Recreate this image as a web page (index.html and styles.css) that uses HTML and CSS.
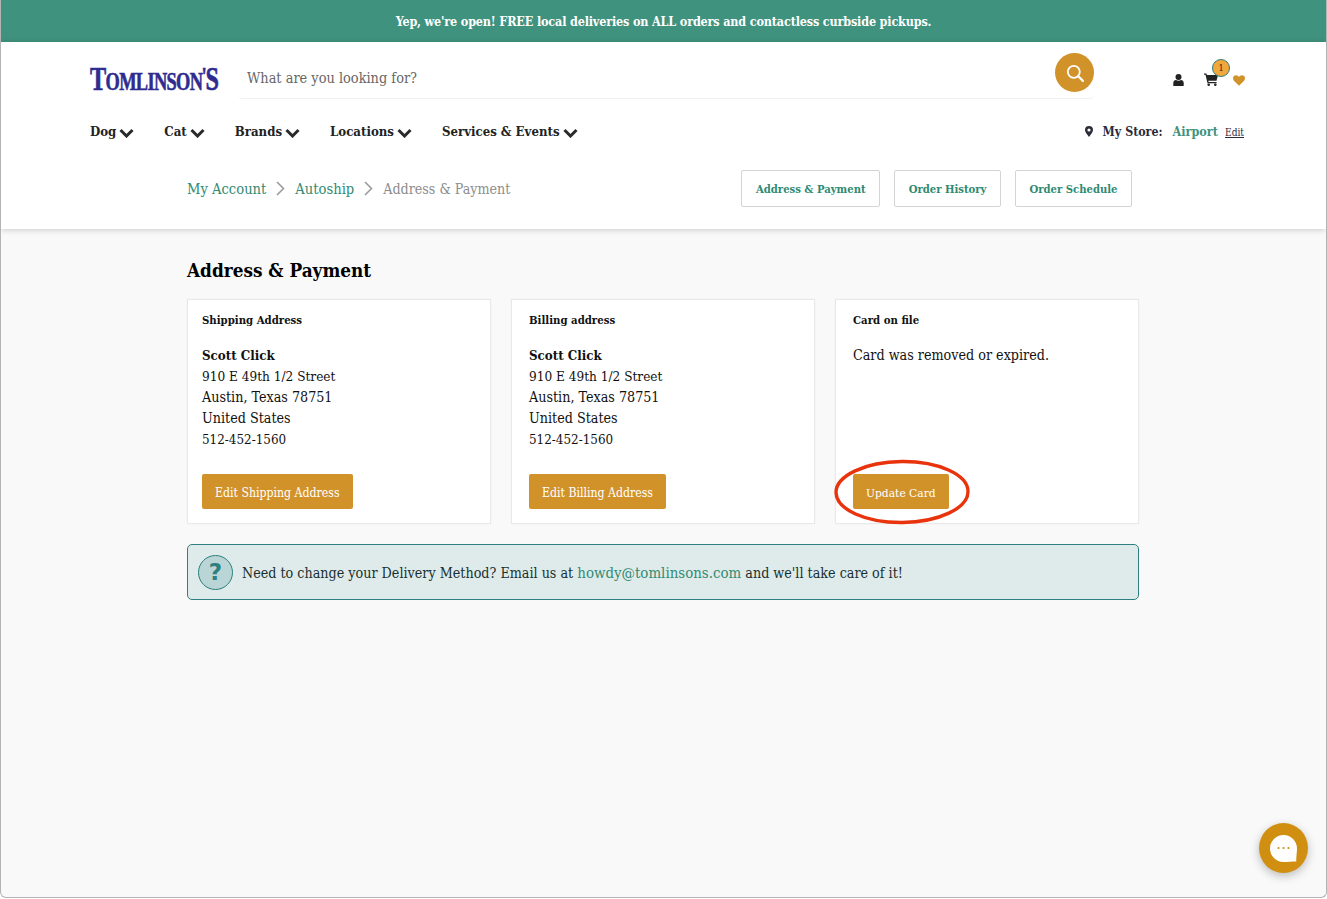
FILE: index.html
```html
<!DOCTYPE html>
<html lang="en">
<head>
<meta charset="utf-8">
<title>Address &amp; Payment</title>
<link rel="stylesheet" href="styles.css">
</head>
<body>
<div class="window">
  <div class="promo">Yep, we're open! FREE local deliveries on ALL orders and contactless curbside pickups.</div>
  <header class="header">
    <div class="top-row">
      <div class="logo-box"><a class="logo"><span class="logo-big">T</span>OMLINSON<span class="logo-apos">'</span><span class="logo-big">S</span></a></div>
      <div class="search">
        <span class="search-text">What are you looking for?</span>
        <span class="search-btn">
          <svg width="20" height="20" viewBox="0 0 20 20" fill="none" stroke="#fff" stroke-width="1.8" stroke-linecap="round"><circle cx="8.8" cy="8.8" r="6"/><path d="M13.3 13.3l4.6 4.6" stroke-width="2.2"/></svg>
        </span>
      </div>
      <div class="icons">
        <svg class="icon-user" width="11" height="12" viewBox="0 0 11 12" fill="#222"><circle cx="5.5" cy="3" r="3"/><path d="M0.3 12V8.8C0.3 7.2 1.6 6 3 6c.7.5 1.5.8 2.5.8S7.300 6.500 8 6c1.400 0 2.700 1.200 2.700 2.800V12z"/></svg>
        <span class="cart">
          <svg width="14" height="13" viewBox="0 0 14 13" fill="#222"><path d="M0 .6h2.400l.5 1.500H14l-1.500 5.700H4.300l.3 1.300h8v1.200H3.500L1.500 1.800H0z"/><circle cx="4.700" cy="11.700" r="1.300"/><circle cx="11.300" cy="11.700" r="1.300"/></svg>
          <span class="badge">1</span>
        </span>
        <svg class="icon-heart" width="12" height="11" viewBox="0 0 12 11" fill="#d2922a"><path d="M6 10.800L.9 5.700C-.3 4.400-.3 2.300.9 1.100 2.100-.1 4-.1 5.200 1.100l.8.8.8-.8c1.200-1.200 3.100-1.200 4.300 0 1.200 1.200 1.200 3.300 0 4.600z"/></svg>
      </div>
    </div>
    <div class="nav-row">
      <nav class="nav">
        <a class="nav-item">Dog<svg class="chev" width="15" height="10" viewBox="0 0 15 10" fill="none" stroke="#2a2a2a" stroke-width="3"><path d="M1.500 2l6 6 6-6"/></svg></a>
        <a class="nav-item">Cat<svg class="chev" width="15" height="10" viewBox="0 0 15 10" fill="none" stroke="#2a2a2a" stroke-width="3"><path d="M1.500 2l6 6 6-6"/></svg></a>
        <a class="nav-item">Brands<svg class="chev" width="15" height="10" viewBox="0 0 15 10" fill="none" stroke="#2a2a2a" stroke-width="3"><path d="M1.500 2l6 6 6-6"/></svg></a>
        <a class="nav-item">Locations<svg class="chev" width="15" height="10" viewBox="0 0 15 10" fill="none" stroke="#2a2a2a" stroke-width="3"><path d="M1.500 2l6 6 6-6"/></svg></a>
        <a class="nav-item">Services &amp; Events<svg class="chev" width="15" height="10" viewBox="0 0 15 10" fill="none" stroke="#2a2a2a" stroke-width="3"><path d="M1.500 2l6 6 6-6"/></svg></a>
      </nav>
      <div class="store">
        <svg class="pin" width="8" height="11" viewBox="0 0 8 11" fill="#2b2b3a"><path fill-rule="evenodd" d="M4 0a4 4 0 0 1 4 4c0 2-2.500 5-4 7-1.500-2-4-5-4-7a4 4 0 0 1 4-4zm0 2.400a1.600 1.600 0 1 0 0 3.200 1.600 1.600 0 0 0 0-3.200z"/></svg>
        <span class="store-label">My Store:</span>
        <span class="store-name">Airport</span>
        <span class="store-edit">Edit</span>
      </div>
    </div>
    <div class="crumb-row">
      <div class="crumbs">
        <a class="crumb-link">My Account</a>
        <svg class="crumb-sep" width="9" height="15" viewBox="0 0 9 15" fill="none" stroke="#999" stroke-width="1.500"><path d="M1 1l6.500 6.500L1 14"/></svg>
        <a class="crumb-link">Autoship</a>
        <svg class="crumb-sep" width="9" height="15" viewBox="0 0 9 15" fill="none" stroke="#999" stroke-width="1.500"><path d="M1 1l6.500 6.500L1 14"/></svg>
        <span class="crumb-current">Address &amp; Payment</span>
      </div>
      <div class="tabs">
        <a class="tab">Address &amp; Payment</a>
        <a class="tab">Order History</a>
        <a class="tab">Order Schedule</a>
      </div>
    </div>
  </header>
  <main class="main">
    <h1 class="title">Address &amp; Payment</h1>
    <div class="cards">
      <section class="card card-first">
        <h2 class="card-title">Shipping Address</h2>
        <div class="card-body">
          <strong class="name">Scott Click</strong>
          <div class="line-num">910 E 49th 1/2 Street</div>
          <div class="line-text">Austin, Texas 78751</div>
          <div class="line-text">United States</div>
          <div class="line-phone">512-452-1560</div>
        </div>
        <a class="btn">Edit Shipping Address</a>
      </section>
      <section class="card">
        <h2 class="card-title">Billing address</h2>
        <div class="card-body">
          <strong class="name">Scott Click</strong>
          <div class="line-num">910 E 49th 1/2 Street</div>
          <div class="line-text">Austin, Texas 78751</div>
          <div class="line-text">United States</div>
          <div class="line-phone">512-452-1560</div>
        </div>
        <a class="btn">Edit Billing Address</a>
      </section>
      <section class="card">
        <h2 class="card-title">Card on file</h2>
        <div class="card-body card-msg">Card was removed or expired.</div>
        <a class="btn btn-small">Update Card</a>
        <svg class="circle-mark" width="138" height="68" viewBox="0 0 138 68" fill="none"><ellipse cx="68" cy="33" rx="66" ry="30.500" stroke="#e8330c" stroke-width="3.400" transform="rotate(-0.500 68 33)"/></svg>
      </section>
    </div>
    <div class="notice">
      <span class="notice-icon">?</span>
      <p class="notice-text">Need to change your Delivery Method? Email us at <a class="notice-link">howdy@tomlinsons.com</a> and we'll take care of it!</p>
    </div>
  </main>
  <div class="chat">
    <svg width="27" height="27" viewBox="0 0 27 27"><path d="M13.500 0a13.500 13.500 0 0 1 13.500 13.500c0 4-.8 8.500-.8 13-4.200 0-8.700.5-12.700.5a13.500 13.500 0 0 1 0-27z" fill="#fff"/><circle cx="8.500" cy="13" r="1.100" fill="#d08f10"/><circle cx="13.500" cy="13" r="1.100" fill="#d08f10"/><circle cx="18.500" cy="13" r="1.100" fill="#d08f10"/></svg>
  </div>
</div>
</body>
</html>
```
FILE: styles.css
```css
* { box-sizing: border-box; }
html, body { margin: 0; padding: 0; background: #fff; }
body { font-family: "DejaVu Serif Condensed", "DejaVu Serif", serif; color: #111; }
.window {
  position: relative;
  width: 1327px;
  height: 898px;
  display: flex;
  flex-direction: column;
  border: 1px solid #b4b4b4;
  border-top: 0;
  border-radius: 0 0 6px 6px;
  overflow: hidden;
  background: #f9f9f9;
}
.promo {
  height: 42px;
  background: #3f927d;
  color: #fff;
  font-size: 12.500px;
  letter-spacing: -0.170px;
  font-weight: 700;
  line-height: 43px;
  text-align: center;
  flex: none;
}
.header {
  height: 187px;
  flex: none;
  background: #fff;
  box-shadow: 0 1px 6px rgba(0,0,0,.18);
  position: relative;
  display: flex;
  flex-direction: column;
}
.top-row {
  display: flex;
  align-items: center;
  height: 57px;
  padding: 11px 0 0 89px;
}
.logo-box {
  width: 149px;
  height: 36px;
  flex: none;
  margin-top: 2px;
}
.logo {
  display: inline-block;
  transform: scaleX(.735);
  transform-origin: left center;
  font-family: "Liberation Serif", serif;
  font-weight: 700;
  font-size: 25px;
  line-height: 36px;
  letter-spacing: -0.900px;
  color: #2f2c8f;
  white-space: nowrap;
  -webkit-text-stroke: .6px #2f2c8f;
}
.logo-big { font-size: 33px; }
.logo-apos { font-size: 26px; vertical-align: 5px; margin: 0 -1px; }
.search {
  width: 855px;
  height: 46px;
  flex: none;
  display: flex;
  align-items: flex-start;
  justify-content: space-between;
  padding-left: 8px;
  border-bottom: 1px solid #f0f0f0;
  border-radius: 0 0 4px 4px;
}
.search-text { font-size: 14.400px; line-height: 50px; color: #666; }
.search-btn {
  width: 39px;
  height: 39px;
  border-radius: 50%;
  background: #d2922a;
  display: flex;
  align-items: center;
  justify-content: center;
}
.icons {
  display: flex;
  align-items: flex-end;
  margin-left: 79px;
  height: 20px;
  padding-top: 4px;
}
.cart { position: relative; margin-left: 20px; display: block; height: 13px; }
.cart svg { display: block; }
.icon-heart { margin-left: 15px; }
.badge {
  position: absolute;
  left: 8px;
  top: -14px;
  width: 18px;
  height: 18px;
  border-radius: 50%;
  background: #f2a73b;
  border: 1px solid #2f7f7f;
  font-size: 9px;
  line-height: 16px;
  text-align: center;
  color: #222;
}
.nav-row {
  display: flex;
  align-items: center;
  justify-content: space-between;
  height: 52px;
  padding: 12px 82px 0 89px;
}
.nav { display: flex; gap: 30px; }
.nav-item {
  display: flex;
  align-items: center;
  font-size: 13.100px;
  font-weight: 700;
  color: #222;
  gap: 3px;
}
.chev { margin-top: 3px; }
.store { display: flex; align-items: center; font-weight: 700; font-size: 12.300px; color: #2b2b3a; }
.pin { margin-right: 10px; }
.store-name { color: #3f927d; margin-left: 10px; font-size: 12.500px; }
.store-edit { font-size: 10.100px; font-weight: 400; text-decoration: underline; margin-left: 7px; margin-top: 2px; }
.crumb-row {
  display: flex;
  align-items: center;
  justify-content: space-between;
  height: 37px;
  margin-top: 19px;
  padding: 0 194px 0 186px;
}
.crumbs { display: flex; align-items: center; font-size: 14.150px; }
.crumb-link { color: #2f8a72; font-size: 14.600px; }
.crumb-sep { margin: 0 10px; }
.crumb-current { color: #8d8d8d; }
.tabs { display: flex; gap: 14px; }
.tab {
  height: 37px;
  display: flex;
  align-items: center;
  padding: 0 13.500px;
  background: #fff;
  border: 1px solid #d4d4d4;
  border-radius: 2px;
  color: #2f8a72;
  font-size: 11.200px;
  font-weight: 700;
}
.main { flex: 1; padding: 0 187px 0 186px; }
.title { margin: 28px 0 16px; font-size: 18.800px; line-height: 26px; font-weight: 700; color: #000; }
.cards { display: grid; grid-template-columns: repeat(3, 304px); gap: 20px; }
.card {
  position: relative;
  height: 225px;
  background: #fff;
  border: 1px solid #e9e9e9;
  box-shadow: 0 0 2px rgba(0,0,0,.04);
  padding: 13px 17px 14px;
  display: flex;
  flex-direction: column;
}
.card-first { padding-left: 14px; }
.card-title { margin: 0 0 17px; font-size: 11.300px; line-height: 15px; font-weight: 700; color: #111; }
.card-body { font-size: 13.800px; line-height: 21px; color: #111; flex: 1; }
.card-msg { font-size: 14.200px; }
.name { display: block; font-size: 13.200px; }
.line-num { font-size: 13.500px; }
.line-text { font-size: 14.200px; }
.line-phone { font-size: 13.300px; }
.btn {
  align-self: flex-start;
  height: 35px;
  line-height: 38px;
  padding: 0 13px;
  background: #d2922a;
  color: #fff;
  font-size: 12.200px;
  border-radius: 2px;
}
.btn-small { font-size: 11.900px; }
.circle-mark { position: absolute; left: -2px; top: 159px; }
.notice {
  margin-top: 20px;
  height: 56px;
  display: flex;
  align-items: center;
  padding-left: 10px;
  background: #dfebeb;
  border: 1px solid #2f7f7f;
  border-radius: 5px;
}
.notice-icon {
  width: 35px;
  height: 35px;
  flex: none;
  border-radius: 50%;
  background: #b9d5d5;
  border: 1px solid #2f7f7f;
  color: #2f7f7f;
  font-family: "DejaVu Sans", sans-serif;
  font-weight: 700;
  font-size: 23px;
  line-height: 33px;
  text-align: center;
}
.notice-text { margin: 1px 0 0 9px; font-size: 14.200px; color: #17302f; }
.notice-link { color: #2f8a72; font-size: 14.900px; }
.chat {
  position: absolute;
  left: 1258px;
  top: 823px;
  width: 49px;
  height: 50px;
  border-radius: 50%;
  background: #d08f10;
  box-shadow: 0 3px 10px rgba(0,0,0,.25);
  display: flex;
  align-items: center;
  justify-content: center;
}
```
